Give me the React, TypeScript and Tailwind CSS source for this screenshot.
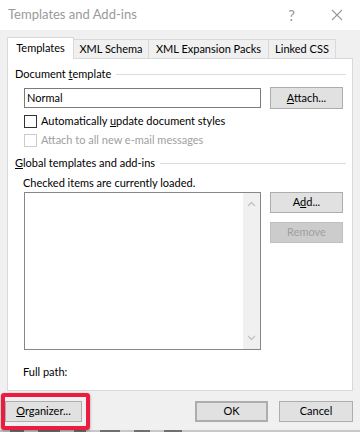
const font = { fontFamily: 'Lato, "Liberation Sans", sans-serif' };

function Btn({ children, className = '', disabled = false }: { children: React.ReactNode; className?: string; disabled?: boolean }) {
  return (
    <div
      className={
        'flex items-center justify-center border text-[11px] ' +
        (disabled ? 'bg-[#cccccc] border-[#bfbfbf] text-[#a0a0a0] ' : 'bg-[#e1e1e1] border-[#adadad] text-black ') +
        className
      }
    >
      {children}
    </div>
  );
}

function SectionHeader({ children }: { children: React.ReactNode }) {
  return (
    <div className="flex h-4 items-center pl-[7px] pr-[6px] text-[11px] text-black">
      <span className="whitespace-nowrap">{children}</span>
      <div className="ml-[5px] h-px flex-1 bg-[#dcdcdc]" />
    </div>
  );
}

export default function App() {
  return (
    <div className="relative flex h-[432px] w-[360px] flex-col overflow-hidden bg-[#f0f0f0]" style={font}>
      {/* title bar */}
      <div className="flex h-[30px] shrink-0 items-center bg-white pl-2 pr-4 text-[13px] text-[#9a9a9a]">
        <span className="flex-1">Templates and Add-ins</span>
        <span className="mr-[36px] text-[15px]">?</span>
        <svg width="12" height="12" viewBox="0 0 12 12" className="mr-[1px]">
          <path d="M1 1 L11 11 M11 1 L1 11" stroke="#9a9a9a" strokeWidth="1.1" />
        </svg>
      </div>

      {/* tabs */}
      <div className="mt-[7px] flex h-[21px] shrink-0 items-end pl-[7px] text-[11px] text-black">
        <div className="relative z-10 -mb-px flex h-[22px] w-[67px] items-center justify-center border border-b-0 border-[#d9d9d9] bg-white pb-[1px]">
          Templates
        </div>
        <div className="flex h-[19px] w-[75px] items-center justify-center whitespace-nowrap border border-l-0 border-b-0 border-[#d9d9d9]">XML Schema</div>
        <div className="flex h-[19px] w-[120px] items-center justify-center whitespace-nowrap border border-l-0 border-b-0 border-[#d9d9d9]">XML Expansion Packs</div>
        <div className="flex h-[19px] w-[67px] items-center justify-center whitespace-nowrap border border-l-0 border-b-0 border-[#d9d9d9]">Linked CSS</div>
      </div>

      {/* panel */}
      <div className="mx-[7px] flex h-[333px] w-[346px] shrink-0 flex-col border border-[#d9d9d9] bg-white text-[11px] text-black">
        <div className="mt-[7px]">
          <SectionHeader>
            Document <u>t</u>emplate
          </SectionHeader>
        </div>
        <div className="mt-[5px] flex h-[22px] items-center pl-4">
          <div className="flex h-[20px] w-[237px] items-center border border-[#7a7a7a] px-[2px]">Normal</div>
          <Btn className="ml-[9px] h-[22px] w-[73px]">
            <span>
              <u>A</u>ttach...
            </span>
          </Btn>
        </div>
        <div className="mt-[6px] flex h-[13px] items-center pl-4">
          <div className="h-[13px] w-[13px] border border-[#333333] bg-white" />
          <span className="ml-[4px]">
            Automatically <u>u</u>pdate document styles
          </span>
        </div>
        <div className="mt-[6px] flex h-[13px] items-center pl-4 text-[#a0a0a0]">
          <div className="h-[13px] w-[13px] border border-[#cccccc] bg-white" />
          <span className="ml-[4px]">Attach to all new e-mail messages</span>
        </div>
        <div className="mt-[8px]">
          <SectionHeader>
            <u>G</u>lobal templates and add-ins
          </SectionHeader>
        </div>
        <div className="mt-[4px] flex h-4 items-center pl-[15px]">Checked items are currently loaded.</div>
        <div className="mt-[1px] flex pl-4">
          <div className="flex h-[158px] w-[237px] justify-end border border-[#828790]">
            <div className="flex w-[17px] flex-col items-center justify-between bg-[#f0f0f0] py-[8px]">
              <svg width="9" height="6" viewBox="0 0 9 6">
                <path d="M1 5 L4.5 1.5 L8 5" fill="none" stroke="#c2c2c2" strokeWidth="1.3" />
              </svg>
              <svg width="9" height="6" viewBox="0 0 9 6">
                <path d="M1 1 L4.5 4.5 L8 1" fill="none" stroke="#c2c2c2" strokeWidth="1.3" />
              </svg>
            </div>
          </div>
          <div className="ml-[9px] flex flex-col gap-[9px]">
            <Btn className="h-[21px] w-[73px]">
              <span>
                A<u>d</u>d...
              </span>
            </Btn>
            <Btn disabled className="h-[21px] w-[73px]">
              Remove
            </Btn>
          </div>
        </div>
        <div className="mt-[14px] flex h-4 items-center pl-[15px]">Full path:</div>
      </div>

      {/* bottom buttons */}
      <div className="mt-[10px] flex h-[21px] shrink-0 items-center pl-[5px]">
        <Btn className="h-[21px] w-[77px]">
          <span>
            <u>O</u>rganizer...
          </span>
        </Btn>
        <div className="flex-1" />
        <Btn className="h-[21px] w-[73px] border-2 border-[#0078d7]">OK</Btn>
        <Btn className="ml-[11px] mr-[7px] h-[21px] w-[74px]">Cancel</Btn>
      </div>

      {/* background peeking below */}
      <div className="mt-auto flex h-[2px] shrink-0 gap-[14px] bg-[#c8c8c8] pl-[10px]">
        <div className="h-[2px] w-[14px] bg-[#707070]" />
        <div className="h-[2px] w-[22px] bg-[#707070]" />
        <div className="h-[2px] w-[12px] bg-[#707070]" />
        <div className="h-[2px] w-[20px] bg-[#707070]" />
        <div className="h-[2px] w-[16px] bg-[#707070]" />
        <div className="h-[2px] w-[18px] bg-[#707070]" />
      </div>

      {/* highlight annotation */}
      <div className="absolute left-[1px] top-[393px] h-[37px] w-[89px] rounded-[3px] border-[4px] border-[#ec1c40] shadow-[0_1px_3px_rgba(0,0,0,0.35)]" />
    </div>
  );
}
